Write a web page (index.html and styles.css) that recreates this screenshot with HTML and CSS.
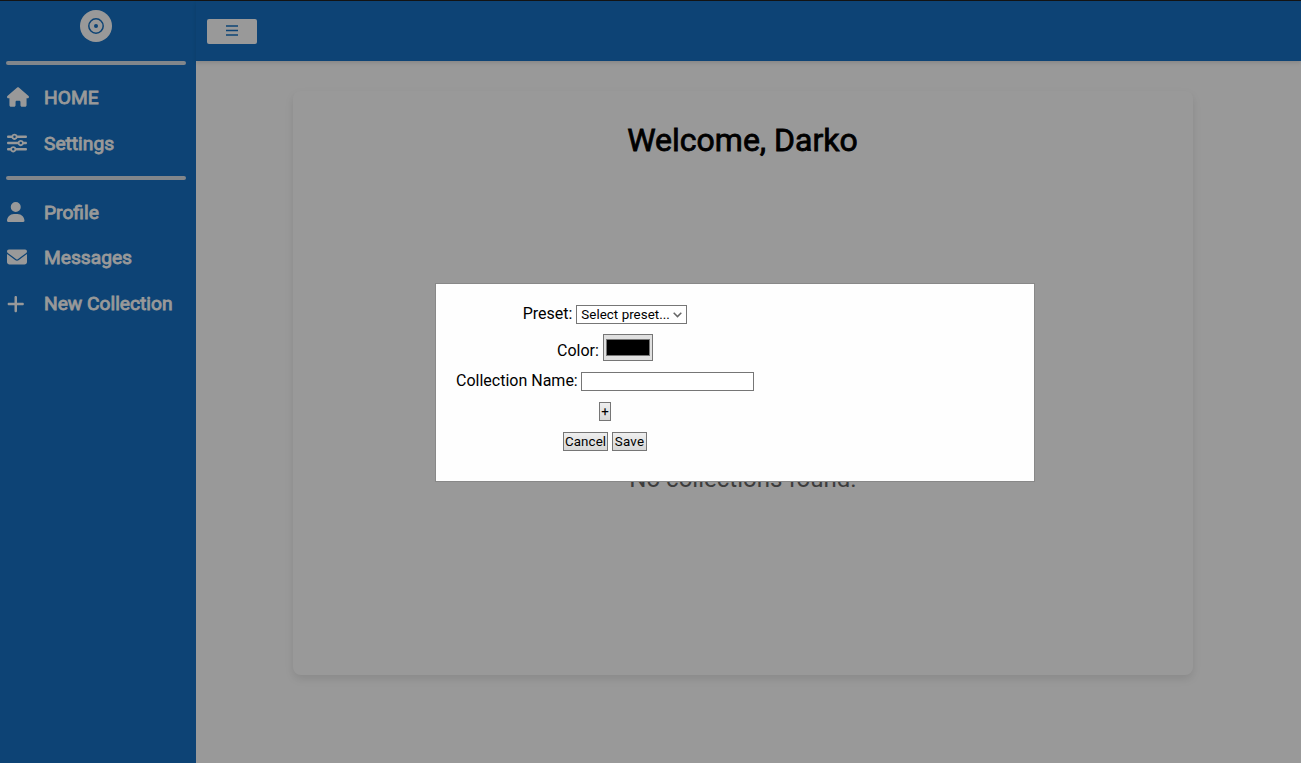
FILE: index.html
```html
<!DOCTYPE html>
<html lang="en">
<head>
<meta charset="utf-8">
<title>Collections</title>
<link rel="stylesheet" href="styles.css">
</head>
<body>
<div class="app">
  <aside class="sidebar">
    <div class="brand">
      <svg class="logo" viewBox="0 0 32 32"><circle cx="16" cy="16" r="16" fill="#fff"/><circle cx="16" cy="16" r="7.2" fill="none" stroke="#1671c3" stroke-width="1.5"/><circle cx="16" cy="16" r="2" fill="#1671c3"/></svg>
    </div>
    <hr class="rule">
    <nav class="nav nav-main">
      <a class="item"><svg class="icon icon-home" viewBox="0 0 576 512"><path d="M575.8 255.5c0 18-15 32.1-32 32.1h-32l.7 160.2c0 2.7-.2 5.4-.5 8.1V472c0 22.1-17.9 40-40 40H392c-22.1 0-40-17.9-40-40V384c0-17.7-14.3-32-32-32H256c-17.7 0-32 14.3-32 32v88c0 22.1-17.9 40-40 40H104c-22.1 0-40-17.9-40-40V287.6H32c-18 0-32-14-32-32.1c0-9 3-17 10-24L266.4 8c7-7 15-8 22-8s15 2 21 7L564.8 231.5c8 7 12 15 11 24z"/></svg><span>HOME</span></a>
      <a class="item"><svg class="icon icon-full" viewBox="0 0 512 512"><path d="M0 416c0 17.7 14.3 32 32 32l54.7 0c12.3 28.3 40.5 48 73.3 48s61-19.7 73.3-48L480 448c17.7 0 32-14.3 32-32s-14.3-32-32-32l-246.7 0c-12.3-28.3-40.5-48-73.3-48s-61 19.7-73.3 48L32 384c-17.7 0-32 14.3-32 32zm128 0a32 32 0 1 1 64 0 32 32 0 1 1 -64 0zM320 256a32 32 0 1 1 64 0 32 32 0 1 1 -64 0zm32-80c-32.8 0-61 19.7-73.3 48L32 224c-17.7 0-32 14.3-32 32s14.3 32 32 32l246.7 0c12.3 28.3 40.5 48 73.3 48s61-19.7 73.3-48l54.7 0c17.7 0 32-14.3 32-32s-14.3-32-32-32l-54.7 0c-12.3-28.3-40.5-48-73.3-48zM192 128a32 32 0 1 1 0-64 32 32 0 1 1 0 64zm73.3-64C253 35.7 224.8 16 192 16s-61 19.7-73.3 48L32 64C14.3 64 0 78.3 0 96s14.3 32 32 32l86.7 0c12.3 28.3 40.5 48 73.3 48s61-19.7 73.3-48L480 128c17.7 0 32-14.3 32-32s-14.3-32-32-32L265.3 64z"/></svg><span>Settings</span></a>
    </nav>
    <hr class="rule">
    <nav class="nav nav-user">
      <a class="item"><svg class="icon icon-narrow" viewBox="0 0 448 512"><path d="M224 256A128 128 0 1 0 224 0a128 128 0 1 0 0 256zm-45.7 48C79.8 304 0 383.8 0 482.3C0 498.7 13.3 512 29.7 512H418.3c16.4 0 29.7-13.3 29.7-29.7C448 383.8 368.2 304 269.7 304H178.3z"/></svg><span>Profile</span></a>
      <a class="item"><svg class="icon icon-full icon-mail" viewBox="0 0 512 512"><path d="M48 64C21.5 64 0 85.5 0 112c0 15.1 7.1 29.3 19.2 38.4L236.8 313.6c11.4 8.5 27 8.5 38.4 0L492.8 150.4c12.1-9.1 19.2-23.3 19.2-38.4c0-26.5-21.5-48-48-48H48zM0 176V384c0 35.3 28.7 64 64 64H448c35.3 0 64-28.7 64-64V176L294.4 339.2c-22.8 17.1-54 17.1-76.8 0L0 176z"/></svg><span>Messages</span></a>
      <a class="item"><svg class="icon icon-narrow" viewBox="0 0 448 512"><path d="M256 80c0-17.7-14.3-32-32-32s-32 14.3-32 32V224H48c-17.7 0-32 14.3-32 32s14.3 32 32 32H192V432c0 17.7 14.3 32 32 32s32-14.3 32-32V288H400c17.7 0 32-14.3 32-32s-14.3-32-32-32H256V80z"/></svg><span>New Collection</span></a>
    </nav>
  </aside>
  <div class="content">
    <header class="topbar">
      <button class="toggle" aria-label="Toggle menu"><svg width="12" height="11" viewBox="0 0 12 11"><path d="M0 1h12M0 5.5h12M0 10h12" stroke="#1671c3" stroke-width="1.4"/></svg></button>
    </header>
    <main class="card">
      <h1 class="title">Welcome, Darko</h1>
      <p class="empty">No collections found.</p>
    </main>
  </div>
</div>
<div class="overlay">
  <section class="modal">
    <form class="form">
      <div class="row row-preset"><label>Preset:</label><span class="select">Select preset...<svg width="9" height="6" viewBox="0 0 9 6"><path d="M.7.8 4.5 4.6 8.3.8" fill="none" stroke="#666" stroke-width="1.5"/></svg></span></div>
      <div class="row row-color"><label>Color:</label><span class="color"><span class="swatch"></span></span></div>
      <div class="row row-name"><label>Collection Name:</label><input class="name" type="text"></div>
      <div class="row row-add"><button class="btn" type="button">+</button></div>
      <div class="row row-actions"><button class="btn btn-cancel" type="button">Cancel</button><button class="btn btn-save" type="button">Save</button></div>
    </form>
  </section>
</div>
</body>
</html>
```
FILE: styles.css
```css
* { box-sizing: border-box; }
body { margin: 0; height: 763px; overflow: hidden; background: #fff; font: 16px/19px Roboto, sans-serif; color: #000; }
.app { display: flex; height: 763px; border-top: 1px solid #222; }
.sidebar { width: 196px; flex: none; background: #1671c3; color: #fff; padding: 9px 10px 0 6px; }
.brand { height: 51px; text-align: center; }
.logo { width: 32px; height: 32px; display: block; margin: 0 auto; }
.rule { height: 4px; margin: 0; border: 0; border-radius: 2px; background: #d7dfe8; }
.nav { padding-left: 1px; }
.nav-main { height: 111px; padding-top: 9px; }
.nav-user { padding-top: 9px; }
.item { display: flex; align-items: center; height: 46px; font-size: 19.2px; line-height: 22px; -webkit-text-stroke: .8px #fff; }
.nav-user .item:nth-child(2) { height: 45px; }
.nav-user .item:nth-child(3) { height: 47px; }
.item span { margin-left: auto; padding-top: 1px; width: 142px; white-space: nowrap; }
.icon { height: 20px; fill: #fff; -webkit-text-stroke: 0; }
.icon-home { width: 22px; }
.icon-full { width: 20px; }
.icon-mail { margin-bottom: 1px; }
.icon-narrow { width: 17.5px; }
.content { flex: 1; }
.topbar { height: 60px; padding: 18px 11px; background: #1671c3; box-shadow: 0 2px 4px rgba(0,0,0,.12); }
.toggle { display: flex; align-items: center; justify-content: center; width: 50px; height: 25px; padding: 0 0 2px; border: 0; border-radius: 2px; background: #fff; }
.card { width: 900px; height: 584px; margin: 30px 0 0 97px; padding-top: 29px; border-radius: 8px; box-shadow: 0 4px 8px rgba(0,0,0,.1); text-align: center; }
.title { margin: 0; padding-right: 1px; font-size: 32px; line-height: 40px; font-weight: 400; -webkit-text-stroke: .8px #000; }
.empty { margin: 305px 0 0; font-size: 24px; line-height: 28px; color: #666; }
.overlay { position: absolute; inset: 0; padding: 283px 0 0 435px; background: rgba(0,0,0,.4); }
.modal { width: 600px; height: 199px; padding: 20px; border: 1px solid #888; background: #fefefe; }
.form { width: 298px; }
.row { display: flex; justify-content: center; gap: 4px; }
.row label { white-space: nowrap; }
.row-preset { height: 30px; }
.row-color { height: 37px; }
.row-color label { padding-top: 7px; }
.row-name { height: 31px; }
.row-name label { width: 121px; }
.row-add { height: 30px; }
.select { display: flex; align-items: center; justify-content: space-between; width: 111px; height: 19px; margin-top: 1px; padding: 0 4px; border: 1px solid #767676; font-size: 13.333px; letter-spacing: .05px; background: #fff; }
.color { width: 50px; height: 27px; padding: 4px 2px; border: 1px solid #767676; background: #e0e0e0; }
.swatch { display: block; height: 17px; border: 1px solid #777; background: #000; }
.name { width: 173px; height: 19px; margin-top: 1px; padding: 0; border: 1px solid #767676; }
.btn { height: 19px; padding: 0 1px; border: 1px solid #767676; border-radius: 0; background: linear-gradient(#eee, #d8d8d8); color: #000; font: 13.333px/17px Roboto, sans-serif; }
.btn-cancel { width: 45px; letter-spacing: .1px; }
.btn-save { width: 35px; letter-spacing: .2px; }
```
